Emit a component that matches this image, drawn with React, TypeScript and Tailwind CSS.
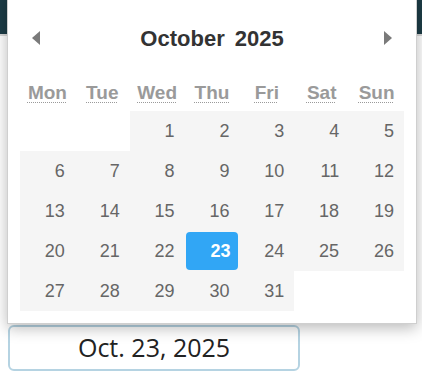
const days = ['Mon', 'Tue', 'Wed', 'Thu', 'Fri', 'Sat', 'Sun'];

// October 2025 starts on a Wednesday
const cells: (number | null)[] = [
  null, null,
  ...Array.from({ length: 31 }, (_, i) => i + 1),
  null, null,
];

export default function App() {
  return (
    <div className="relative h-[374px] w-[422px] overflow-hidden bg-white">
      {/* Page header */}
      <div className="h-[36px] bg-[#1d3d47] border-b-2 border-[#d9d9d9]" />

      {/* Field */}
      <div className="px-[8px] pt-[289px]">
        <div
          className="flex h-[46px] w-[292px] items-center justify-center rounded-[6px] border-2 border-[#b5d3e2] bg-white text-[25px] text-[#222]"
          style={{ fontFamily: '"Open Sans", "Noto Sans", sans-serif' }}
        >
          Oct. 23, 2025
        </div>
      </div>

      {/* Calendar popup */}
      <div
        className="absolute left-[7px] top-[-10px] w-[410px] border border-[#cfcfcf] bg-white px-[12px] pb-[12px] pt-[10px] shadow-[0_4px_14px_rgba(0,0,0,0.28)]"
        style={{ fontFamily: '"Liberation Sans", Arial, sans-serif' }}
      >
        <div className="flex h-[74px] items-center justify-between px-[12px]">
          <svg width="8" height="14" viewBox="0 0 8 14">
            <path d="M8 0 L0 7 L8 14 Z" fill="#7a7a7a" />
          </svg>
          <div className="flex gap-[10px] text-[22px] font-bold text-[#333]">
            <span>October</span>
            <span>2025</span>
          </div>
          <svg width="8" height="14" viewBox="0 0 8 14">
            <path d="M0 0 L8 7 L0 14 Z" fill="#7a7a7a" />
          </svg>
        </div>

        <div className="grid h-[36px] grid-cols-7 items-center text-center">
          {days.map((d) => (
            <abbr
              key={d}
              title={d}
              className="text-[19px] font-bold text-[#9a9a9a] underline decoration-dotted decoration-1 underline-offset-[3px]"
            >
              {d}
            </abbr>
          ))}
        </div>

        <div className="grid grid-cols-7">
          {cells.map((n, i) =>
            n === null ? (
              <div key={i} className="h-[40px]" />
            ) : (
              <div key={i} className="h-[40px] bg-[#f5f5f5]">
                {n === 23 ? (
                  <div className="m-[1px] h-[38px] rounded-[4px] bg-[#31a6f5] pr-[8px] text-right text-[18px] font-bold leading-[38px] text-white">
                    {n}
                  </div>
                ) : (
                  <div className="pr-[10px] text-right text-[18px] leading-[40px] text-[#666]">
                    {n}
                  </div>
                )}
              </div>
            )
          )}
        </div>
      </div>
    </div>
  );
}
